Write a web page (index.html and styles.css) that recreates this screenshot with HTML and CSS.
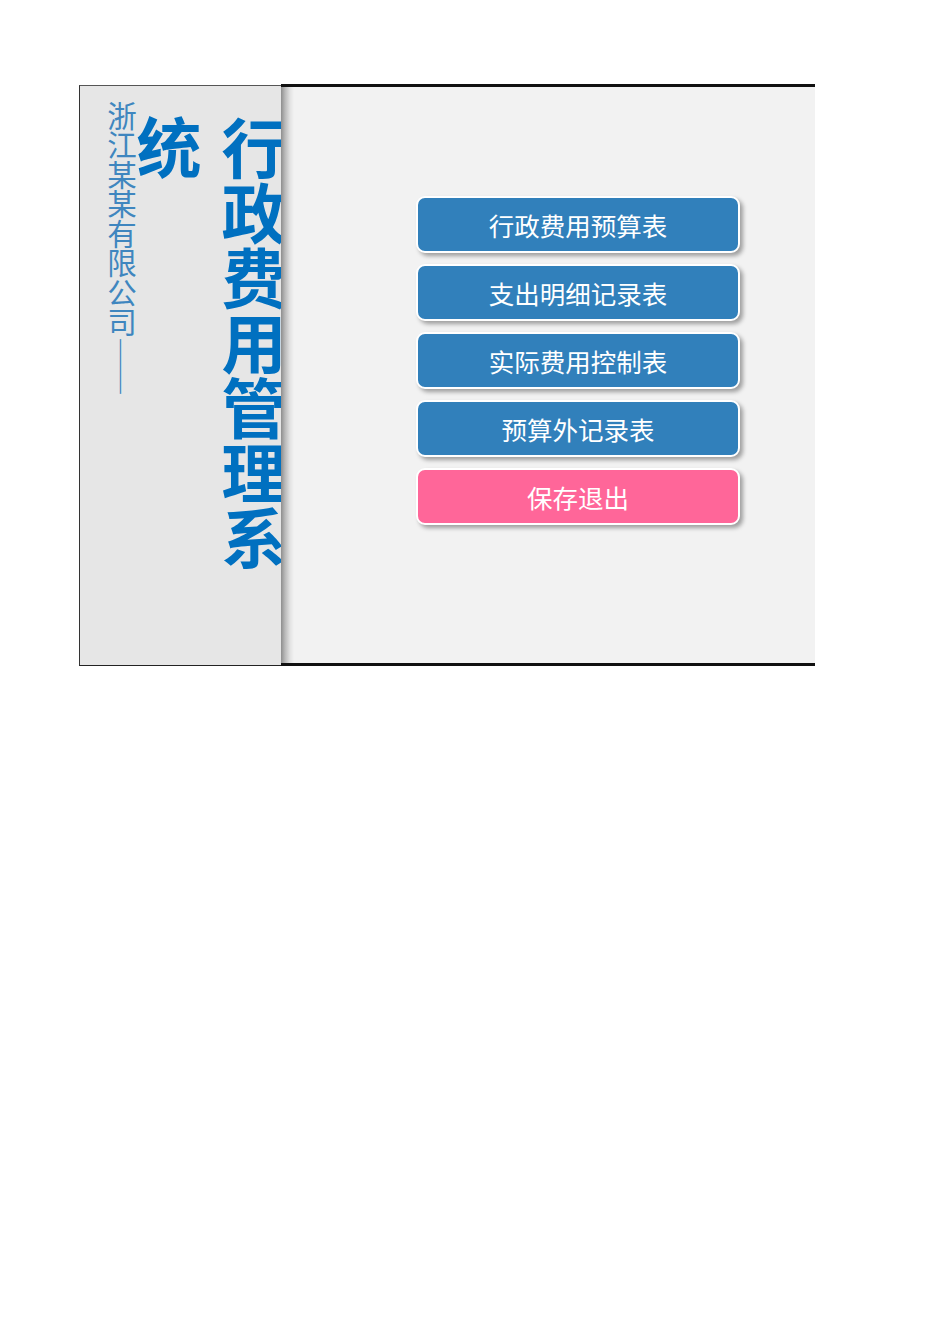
FILE: index.html
```html
<!DOCTYPE html>
<html lang="zh-CN">
<head>
<meta charset="utf-8">
<title>行政费用管理系统</title>
<link rel="stylesheet" href="styles.css">
</head>
<body>
<div class="frame">
  <div class="left">
    <div class="col-small">浙江某某有限公司——</div>
    <div class="col-tong">统</div>
    <div class="col-big">行政费用管理系</div>
  </div>
  <div class="right">
    <div class="menu">
      <div class="btn">行政费用预算表</div>
      <div class="btn">支出明细记录表</div>
      <div class="btn">实际费用控制表</div>
      <div class="btn">预算外记录表</div>
      <div class="btn btn-exit">保存退出</div>
    </div>
  </div>
</div>
</body>
</html>
```

FILE: styles.css
```css
html, body {
  margin: 0;
  padding: 0;
  background: #ffffff;
}
body {
  font-family: "Noto Sans CJK SC", "Noto Sans", sans-serif;
}
.frame {
  display: flex;
  align-items: flex-start;
  margin-top: 84px;
  margin-left: 79px;
  width: 736px;
}
.left {
  box-sizing: border-box;
  margin-top: 1px;
  width: 202px;
  height: 581px;
  flex-shrink: 0;
  background: #e6e6e6;
  border-left: 1px solid #333;
  border-top: 1px solid #555;
  border-bottom: 1px solid #222;
  overflow: hidden;
  display: flex;
  align-items: flex-start;
}
.col-small {
  writing-mode: vertical-rl;
  flex-shrink: 0;
  margin-left: 27px;
  margin-top: 15px;
  font-size: 29.5px;
  line-height: 29px;
  color: #3f86bf;
  white-space: nowrap;
}
.col-tong, .col-big {
  writing-mode: vertical-rl;
  flex-shrink: 0;
  font-size: 65px;
  line-height: 64px;
  font-weight: 700;
  color: #0070c0;
  white-space: nowrap;
}
.col-tong {
  margin-left: 1px;
  margin-top: 29px;
}
.col-big {
  margin-left: 21px;
  margin-top: 30px;
}
.right {
  box-sizing: border-box;
  flex: 1;
  height: 582px;
  border-top: 3px solid #111;
  border-bottom: 3px solid #111;
  background: linear-gradient(to right, #8e8e8e 0, #b9b9b9 4px, #e2e2e2 9px, #f2f2f2 13px);
}
.menu {
  display: flex;
  flex-direction: column;
  gap: 11px;
  margin-left: 135px;
  padding-top: 109px;
  width: 324px;
}
.btn {
  box-sizing: border-box;
  height: 57px;
  border: 2px solid #ffffff;
  border-radius: 9px;
  background: #3180bb;
  color: #ffffff;
  font-size: 25.5px;
  display: flex;
  align-items: center;
  justify-content: center;
  box-shadow: 3px 3px 4px rgba(0, 0, 0, 0.35);
}
.btn-exit {
  background: #ff6699;
}
```
